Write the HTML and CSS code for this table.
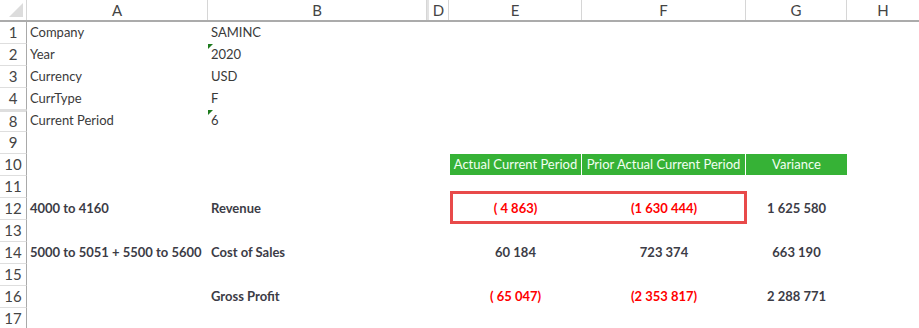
FILE: index.html
```html
<!DOCTYPE html>
<html>
<head>
<meta charset="utf-8">
<link rel="stylesheet" href="styles.css">
</head>
<body>
<div class="sheet">
  <div class="colhead">
    <div class="corner"><span class="tri"></span></div>
    <div class="ch">A</div>
    <div class="ch">B</div>
    <div class="ch ch-d">D</div>
    <div class="ch">E</div>
    <div class="ch">F</div>
    <div class="ch">G</div>
    <div class="ch ch-h">H</div>
  </div>

  <div class="row"><div class="rh">1</div><div class="c a">Company</div><div class="c b">SAMINC</div><div class="c d"></div><div class="c e"></div><div class="c f"></div><div class="c g"></div><div class="c h"></div></div>
  <div class="row"><div class="rh">2</div><div class="c a">Year</div><div class="c b flag">2020</div><div class="c d"></div><div class="c e"></div><div class="c f"></div><div class="c g"></div><div class="c h"></div></div>
  <div class="row"><div class="rh">3</div><div class="c a">Currency</div><div class="c b">USD</div><div class="c d"></div><div class="c e"></div><div class="c f"></div><div class="c g"></div><div class="c h"></div></div>
  <div class="row"><div class="rh">4</div><div class="c a">CurrType</div><div class="c b">F</div><div class="c d"></div><div class="c e"></div><div class="c f"></div><div class="c g"></div><div class="c h"></div></div>
  <div class="row hidden-above"><div class="rh">8</div><div class="c a">Current Period</div><div class="c b flag">6</div><div class="c d"></div><div class="c e"></div><div class="c f"></div><div class="c g"></div><div class="c h"></div></div>
  <div class="row"><div class="rh">9</div><div class="c a"></div><div class="c b"></div><div class="c d"></div><div class="c e"></div><div class="c f"></div><div class="c g"></div><div class="c h"></div></div>
  <div class="row"><div class="rh">10</div><div class="c a"></div><div class="c b"></div><div class="c d"></div><div class="c e hdr">Actual Current Period</div><div class="c f hdr">Prior Actual Current Period</div><div class="c g hdr">Variance</div><div class="c h"></div></div>
  <div class="row"><div class="rh">11</div><div class="c a"></div><div class="c b"></div><div class="c d"></div><div class="c e"></div><div class="c f"></div><div class="c g"></div><div class="c h"></div></div>
  <div class="row bold"><div class="rh">12</div><div class="c a">4000 to 4160</div><div class="c b">Revenue</div><div class="c d"></div><div class="c e num neg">( 4 863)</div><div class="c f num neg">(1 630 444)</div><div class="c g num">1 625 580</div><div class="c h"></div><div class="highlight"></div></div>
  <div class="row"><div class="rh">13</div><div class="c a"></div><div class="c b"></div><div class="c d"></div><div class="c e"></div><div class="c f"></div><div class="c g"></div><div class="c h"></div></div>
  <div class="row bold"><div class="rh">14</div><div class="c a">5000 to 5051 + 5500 to 5600</div><div class="c b">Cost of Sales</div><div class="c d"></div><div class="c e num">60 184</div><div class="c f num">723 374</div><div class="c g num">663 190</div><div class="c h"></div></div>
  <div class="row"><div class="rh">15</div><div class="c a"></div><div class="c b"></div><div class="c d"></div><div class="c e"></div><div class="c f"></div><div class="c g"></div><div class="c h"></div></div>
  <div class="row bold"><div class="rh">16</div><div class="c a"></div><div class="c b">Gross Profit</div><div class="c d"></div><div class="c e num neg">( 65 047)</div><div class="c f num neg">(2 353 817)</div><div class="c g num">2 288 771</div><div class="c h"></div></div>
  <div class="row"><div class="rh">17</div><div class="c a"></div><div class="c b"></div><div class="c d"></div><div class="c e"></div><div class="c f"></div><div class="c g"></div><div class="c h"></div></div>
</div>
</body>
</html>
```
FILE: styles.css
```css
html, body {
  margin: 0;
  padding: 0;
  background: #ffffff;
}
.sheet {
  width: 919px;
  height: 328px;
  overflow: hidden;
  font-family: Lato, "Open Sans", sans-serif;
  font-size: 13px;
  color: #3a3a3a;
}
.colhead, .row {
  display: grid;
  grid-template-columns: 27px 181px 219px 22px 133px 164px 101px 72px;
  position: relative;
}
.colhead {
  height: 20px;
  border-bottom: 2px solid #ababab;
  box-sizing: content-box;
}
.corner {
  position: relative;
  border-right: 1px solid #d6d6d6;
}
.tri {
  position: absolute;
  right: 3px;
  bottom: 3px;
  width: 0;
  height: 0;
  border-left: 14px solid transparent;
  border-bottom: 14px solid #dcdcdc;
}
.ch {
  border-right: 1px solid #d6d6d6;
  text-align: center;
  font-size: 15px;
  line-height: 20px;
  color: #444;
}
.ch-d {
  border-left: 2px solid #e2e2e2;
  box-sizing: border-box;
}
.ch-h {
  border-right: none;
}
.row {
  height: 22px;
}
.rh {
  border-right: 1px solid #a9a9a9;
  border-bottom: 1px solid #dedede;
  text-align: center;
  font-size: 15px;
  line-height: 20px;
  color: #444;
  box-sizing: border-box;
}
.hidden-above .rh {
  border-top: 2px solid #dedede;
  line-height: 18px;
}
.c {
  line-height: 21px;
  white-space: nowrap;
  overflow: visible;
  position: relative;
}
.a {
  padding-left: 3px;
}
.b {
  padding-left: 3px;
}
.bold .c {
  font-weight: bold;
  color: #3c3c46;
}
.num {
  text-align: center;
}
.bold .neg {
  color: #ff0000;
}
.hdr {
  background: #36b236;
  color: #f2fff2;
  text-align: center;
  border-right: 1px solid #ffffff;
  line-height: 21px;
  height: 21px;
  overflow: hidden;
}
.g.hdr {
  border-right: none;
}
.e.hdr {
  margin-left: 1px;
}
.flag::before {
  content: "";
  position: absolute;
  left: 0;
  top: 0;
  width: 0;
  height: 0;
  border-top: 5px solid #1e7b1e;
  border-right: 5px solid transparent;
}
.highlight {
  position: absolute;
  left: 450px;
  top: -7px;
  width: 297px;
  height: 33px;
  border: 3px solid #e84a4a;
  box-sizing: border-box;
  pointer-events: none;
}
```
